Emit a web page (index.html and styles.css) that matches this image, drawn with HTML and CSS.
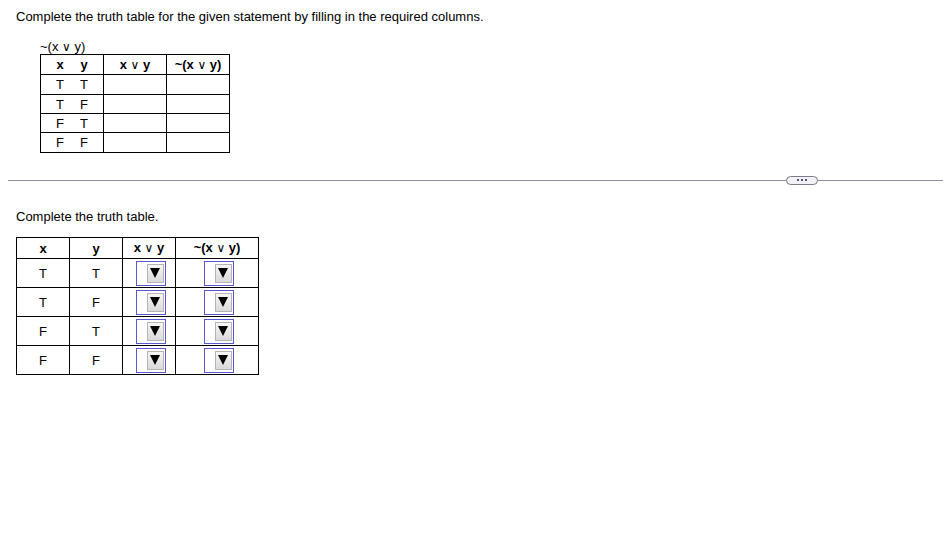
FILE: index.html
```html
<!DOCTYPE html>
<html>
<head>
<meta charset="utf-8">
<link rel="stylesheet" href="styles.css">
</head>
<body>
<div class="part1">
  <p class="instr">Complete the truth table for the given statement by filling in the required columns.</p>
  <div class="expr">~(x <span class="or">∨</span> y)</div>
  <table class="given">
    <colgroup><col class="c63"><col class="c63"><col class="c63"></colgroup>
    <tr class="h20"><th><span class="pair"><span>x</span><span>y</span></span></th><th>x <span class="or">∨</span> y</th><th>~(x <span class="or">∨</span> y)</th></tr>
    <tr class="h20"><td><span class="pair"><span>T</span><span>T</span></span></td><td></td><td></td></tr>
    <tr class="h19"><td><span class="pair"><span>T</span><span>F</span></span></td><td></td><td></td></tr>
    <tr class="h19"><td><span class="pair"><span>F</span><span>T</span></span></td><td></td><td></td></tr>
    <tr class="h20"><td><span class="pair"><span>F</span><span>F</span></span></td><td></td><td></td></tr>
  </table>
</div>

<div class="divider"><span class="pill"><span class="dot"></span><span class="dot"></span><span class="dot"></span></span></div>

<div class="part2">
  <p class="instr">Complete the truth table.</p>
  <table class="answer">
    <colgroup><col class="c53"><col class="c53"><col class="c53"><col class="c83"></colgroup>
    <tr class="h21"><th>x</th><th>y</th><th>x <span class="or">∨</span> y</th><th>~(x <span class="or">∨</span> y)</th></tr>
    <tr class="h29"><td>T</td><td>T</td><td><span class="sel"><span class="btn"><span class="tri"></span></span></span></td><td><span class="sel"><span class="btn"><span class="tri"></span></span></span></td></tr>
    <tr class="h29"><td>T</td><td>F</td><td><span class="sel"><span class="btn"><span class="tri"></span></span></span></td><td><span class="sel"><span class="btn"><span class="tri"></span></span></span></td></tr>
    <tr class="h29"><td>F</td><td>T</td><td><span class="sel"><span class="btn"><span class="tri"></span></span></span></td><td><span class="sel"><span class="btn"><span class="tri"></span></span></span></td></tr>
    <tr class="h29"><td>F</td><td>F</td><td><span class="sel"><span class="btn"><span class="tri"></span></span></span></td><td><span class="sel"><span class="btn"><span class="tri"></span></span></span></td></tr>
  </table>
</div>
</body>
</html>
```
FILE: styles.css
```css
html, body {
  margin: 0;
  padding: 0;
  background: #fff;
}
body {
  font-family: "Liberation Sans", Arial, "DejaVu Sans", sans-serif;
  font-size: 13px;
  color: #000;
  width: 943px;
  height: 548px;
  overflow: hidden;
}
.part1 {
  padding: 9px 0 0 16px;
}
.instr {
  margin: 0;
  line-height: 15px;
}
.or {
  font-family: "DejaVu Sans", sans-serif;
  font-size: 12px;
  font-weight: normal;
}
.expr {
  margin: 15px 0 0 24px;
  line-height: 15px;
  height: 15px;
}
table {
  border-collapse: collapse;
  table-layout: fixed;
}
td, th {
  border: 1px solid #000;
  padding: 0;
  text-align: center;
  vertical-align: middle;
  font-size: 13px;
  line-height: 15px;
}
th { font-weight: bold; }
.given {
  margin-left: 24px;
  width: 190px;
}
.c63 { width: 63px; }
.c53 { width: 53px; }
.c83 { width: 83px; }
.h21 { height: 21px; }
.h20 { height: 20px; }
.h19 { height: 19px; }
.h29 { height: 29px; }
.pair {
  display: inline-flex;
  gap: 16px;
  justify-content: center;
}
.pair span { width: 8px; text-align: center; }
.divider {
  margin: 22px 0 0 8px;
  display: flex;
  align-items: center;
  height: 10px;
}
.divider::before {
  content: "";
  flex: 1;
  height: 1px;
  background: #8c8c9c;
}
.divider::after {
  content: "";
  width: 125px;
  height: 1px;
  background: #8c8c9c;
}
.pill {
  box-sizing: border-box;
  width: 32px;
  height: 9px;
  border: 1px solid #7a7a8a;
  border-radius: 5px;
  background: #f2f2f6;
  display: flex;
  align-items: center;
  justify-content: center;
  gap: 2px;
}
.dot {
  width: 2px;
  height: 2px;
  background: #55556a;
}
.part2 {
  padding: 24px 0 0 16px;
}
.answer {
  margin-top: 13px;
  width: 243px;
}
.sel {
  box-sizing: border-box;
  display: inline-flex;
  justify-content: flex-end;
  align-items: center;
  width: 30px;
  height: 25px;
  border: 1px solid #5a5ad0;
  padding-right: 1px;
  vertical-align: middle;
  margin-left: 3px;
}
.btn {
  box-sizing: border-box;
  width: 17px;
  height: 19px;
  border: 1px solid #b4b4b4;
  background: linear-gradient(#f6f6f6, #dadada);
  display: flex;
  align-items: center;
  justify-content: center;
}
.tri {
  width: 0;
  height: 0;
  border-left: 5px solid transparent;
  border-right: 5px solid transparent;
  border-top: 10px solid #000;
}
```
